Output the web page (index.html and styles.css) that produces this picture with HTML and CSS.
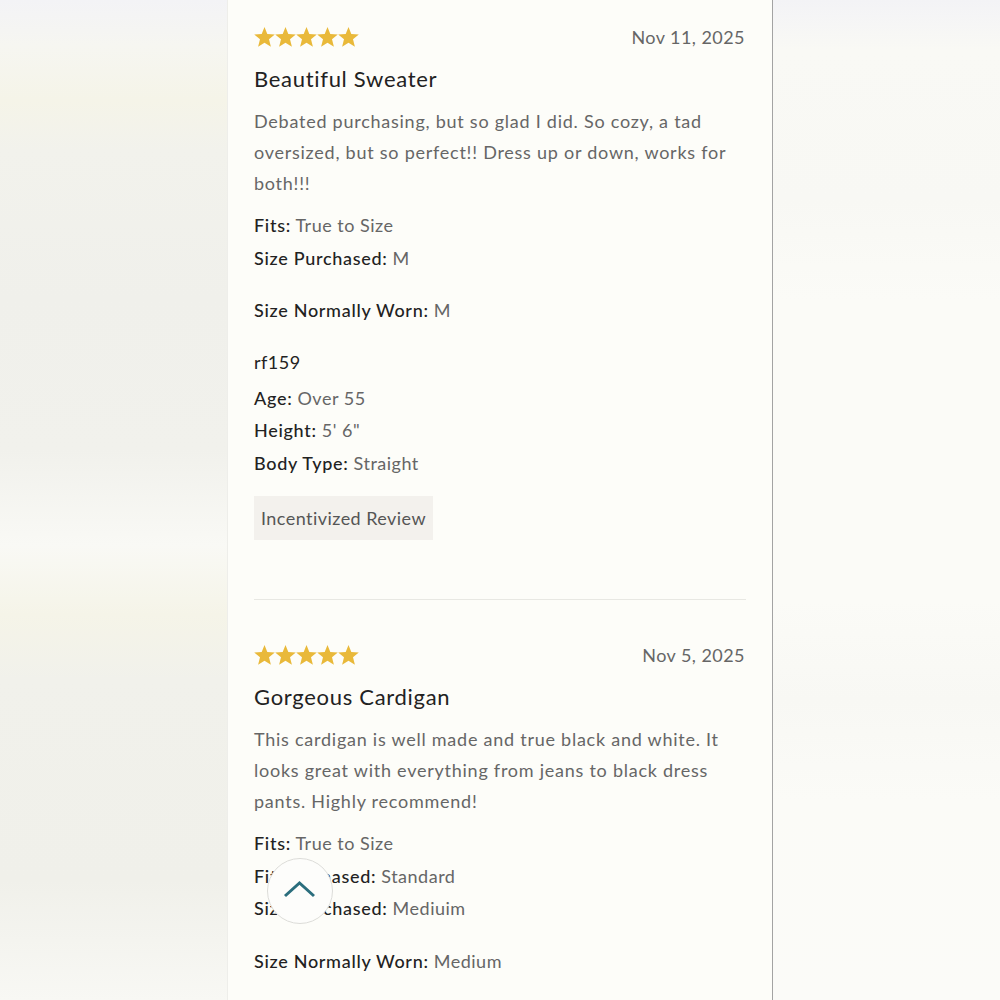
FILE: index.html
```html
<!DOCTYPE html>
<html lang="en">
<head>
<meta charset="utf-8">
<title>Reviews</title>
<link rel="stylesheet" href="styles.css">
</head>
<body>
<div class="backdrop">
  <main class="panel">
    <article class="review">
      <div class="review-head">
        <svg class="stars" width="106" height="21" viewBox="0 0 106 21" aria-label="5 stars">
          <g fill="#e9b93a">
            <polygon points="10.5,0 13.3,7 20.8,7.5 15,12.3 16.9,19.8 10.5,15.7 4.1,19.8 6,12.3 0.2,7.5 7.7,7"/>
            <polygon transform="translate(21,0)" points="10.5,0 13.3,7 20.8,7.5 15,12.3 16.9,19.8 10.5,15.7 4.1,19.8 6,12.3 0.2,7.5 7.7,7"/>
            <polygon transform="translate(42,0)" points="10.5,0 13.3,7 20.8,7.5 15,12.3 16.9,19.8 10.5,15.7 4.1,19.8 6,12.3 0.2,7.5 7.7,7"/>
            <polygon transform="translate(63,0)" points="10.5,0 13.3,7 20.8,7.5 15,12.3 16.9,19.8 10.5,15.7 4.1,19.8 6,12.3 0.2,7.5 7.7,7"/>
            <polygon transform="translate(84,0)" points="10.5,0 13.3,7 20.8,7.5 15,12.3 16.9,19.8 10.5,15.7 4.1,19.8 6,12.3 0.2,7.5 7.7,7"/>
          </g>
        </svg>
        <span class="date">Nov 11, 2025</span>
      </div>
      <h2 class="title">Beautiful Sweater</h2>
      <p class="body">Debated purchasing, but so glad I did. So cozy, a tad oversized, but so perfect!! Dress up or down, works for both!!!</p>
      <div class="meta">
        <div class="row"><span class="label">Fits:</span> True to Size</div>
        <div class="row"><span class="label">Size Purchased:</span> M</div>
        <div class="row row-gap"><span class="label">Size Normally Worn:</span> M</div>
      </div>
      <div class="author">rf159</div>
      <div class="meta">
        <div class="row"><span class="label">Age:</span> Over 55</div>
        <div class="row"><span class="label">Height:</span> 5' 6"</div>
        <div class="row"><span class="label">Body Type:</span> Straight</div>
      </div>
      <div class="badge">Incentivized Review</div>
    </article>

    <article class="review">
      <div class="review-head">
        <svg class="stars" width="106" height="21" viewBox="0 0 106 21" aria-label="5 stars">
          <g fill="#e9b93a">
            <polygon points="10.5,0 13.3,7 20.8,7.5 15,12.3 16.9,19.8 10.5,15.7 4.1,19.8 6,12.3 0.2,7.5 7.7,7"/>
            <polygon transform="translate(21,0)" points="10.5,0 13.3,7 20.8,7.5 15,12.3 16.9,19.8 10.5,15.7 4.1,19.8 6,12.3 0.2,7.5 7.7,7"/>
            <polygon transform="translate(42,0)" points="10.5,0 13.3,7 20.8,7.5 15,12.3 16.9,19.8 10.5,15.7 4.1,19.8 6,12.3 0.2,7.5 7.7,7"/>
            <polygon transform="translate(63,0)" points="10.5,0 13.3,7 20.8,7.5 15,12.3 16.9,19.8 10.5,15.7 4.1,19.8 6,12.3 0.2,7.5 7.7,7"/>
            <polygon transform="translate(84,0)" points="10.5,0 13.3,7 20.8,7.5 15,12.3 16.9,19.8 10.5,15.7 4.1,19.8 6,12.3 0.2,7.5 7.7,7"/>
          </g>
        </svg>
        <span class="date">Nov 5, 2025</span>
      </div>
      <h2 class="title">Gorgeous Cardigan</h2>
      <p class="body">This cardigan is well made and true black and white. It looks great with everything from jeans to black dress pants. Highly recommend!</p>
      <div class="meta">
        <div class="row"><span class="label">Fits:</span> True to Size</div>
        <div class="row"><span class="label">Fit Purchased:</span> Standard</div>
        <div class="row"><span class="label">Size Purchased:</span> Mediuim</div>
        <div class="row row-gap"><span class="label">Size Normally Worn:</span> Medium</div>
      </div>
    </article>
  </main>
  <button class="to-top" aria-label="Back to top">
    <svg width="34" height="20" viewBox="0 0 34 20"><polyline points="2,16 16.5,3 31,16" fill="none" stroke="#2b6e7d" stroke-width="3"/></svg>
  </button>
</div>
</body>
</html>
```

FILE: styles.css
```css
html, body {
  margin: 0;
  padding: 0;
}

body {
  font-family: "Lato", "Noto Sans", sans-serif;
  color: #222;
  background: #f7f7f3;
}

.backdrop {
  min-height: 1000px;
  background-color: #f7f7f3;
  background-image:
    radial-gradient(ellipse 120px 55px at 840px 200px, rgba(240, 240, 235, 0.7), rgba(240, 240, 235, 0)),
    radial-gradient(ellipse 150px 60px at 850px 700px, rgba(240, 240, 235, 0.7), rgba(240, 240, 235, 0)),
    linear-gradient(to bottom, #f3f3f6 0px, #f9f9f5 50px, #f8f8f4 200px, #fbfbf7 300px, #fbfbf7 600px, #f8f8f4 700px, #fbfbf7 800px, #fbfbf8 1000px),
    linear-gradient(to bottom, #f3f3f6 0px, #f6f6f1 45px, #f5f4e8 100px, #f2f2ec 150px, #f0f0eb 300px, #f1f1ec 450px, #f9f9f5 545px, #f5f4e8 615px, #f1f1eb 680px, #f0f0ea 880px, #f8f8f4 1000px);
  background-size: 228px 1000px, 228px 1000px, 228px 1000px, 228px 1000px;
  background-position: right top, right top, right top, left top;
  background-repeat: no-repeat;
}

.panel {
  width: 546px;
  margin: 0 auto;
  box-sizing: border-box;
  padding: 0 26px;
  background: #fdfdf9;
  border-left: 1px solid #eeeeea;
  border-right: 1px solid #a3a3a3;
  min-height: 1000px;
}

.review {
  padding: 44px 0 59px;
  border-bottom: 1px solid #e8e8e3;
}

.review:first-child {
  padding-top: 26px;
}

.review:last-child {
  border-bottom: none;
}

.review-head {
  display: flex;
  justify-content: space-between;
  align-items: center;
  height: 22px;
}

.stars {
  display: block;
}

.date {
  font-size: 18px;
  color: #666;
  letter-spacing: 0.45px;
  margin-right: 1px;
}

.title {
  margin: 17px 0 0;
  font-size: 22px;
  font-weight: 400;
  line-height: 28px;
  letter-spacing: 0.7px;
  color: #222;
}

.body {
  margin: 13px 0 0;
  font-size: 18px;
  line-height: 31px;
  color: #666;
  letter-spacing: 0.75px;
}

.meta {
  margin-top: 10px;
}

.row {
  font-size: 18px;
  line-height: 32.5px;
  color: #666;
  letter-spacing: 0.5px;
}

.row-gap {
  margin-top: 20px;
}

.label {
  color: #222;
  font-weight: 500;
  letter-spacing: 0.7px;
}

.author {
  margin-top: 19px;
  font-size: 18px;
  line-height: 32px;
  color: #222;
  letter-spacing: 0.5px;
}

.author + .meta {
  margin-top: 4px;
}

.badge {
  display: inline-block;
  margin-top: 17px;
  padding: 0 7px;
  height: 44px;
  line-height: 44px;
  background: #f3f1ed;
  color: #555;
  font-size: 18px;
  letter-spacing: 0.45px;
}

.to-top {
  position: fixed;
  left: 267px;
  top: 858px;
  width: 66px;
  height: 66px;
  border-radius: 50%;
  border: 1px solid #dcdcd8;
  background: #fdfdfb;
  padding: 0;
  display: flex;
  align-items: center;
  justify-content: center;
  cursor: pointer;
}

.to-top svg {
  display: block;
  margin-top: -3px;
}
```
